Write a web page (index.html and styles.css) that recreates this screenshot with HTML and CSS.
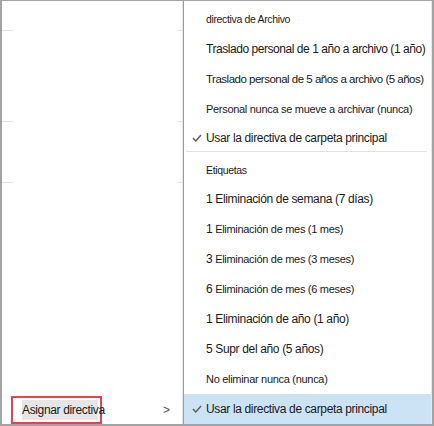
FILE: index.html
```html
<!DOCTYPE html>
<html lang="es">
<head>
<meta charset="utf-8">
<title>Asignar directiva</title>
<link rel="stylesheet" href="styles.css">
</head>
<body>
<div class="frame">
  <div class="pane">
    <div class="rule r1"><span></span><span></span></div>
    <div class="rule r2"><span></span><span></span></div>
    <div class="rule r3"><span></span><span></span></div>
    <div class="assign-row">
      <div class="assign"><span class="hl">Asignar directiv</span>a</div>
      <span class="chev">&gt;</span>
    </div>
  </div>
  <div class="menu">
    <div class="row head"><span>directiva de Archivo</span></div>
    <div class="row lg tight"><span>Traslado personal de 1 año a archivo (1 año)</span></div>
    <div class="row md"><span>Traslado personal de 5 años a archivo (5 años)</span></div>
    <div class="row sm"><span>Personal nunca se mueve a archivar (nunca)</span></div>
    <div class="row lg short"><svg class="check" width="10" height="8" viewBox="0 0 10 8"><polyline points="1,4 3.8,7 9,1" fill="none" stroke="#606060" stroke-width="1.5"/></svg><span>Usar la directiva de carpeta principal</span></div>
    <div class="sep"></div>
    <div class="row head tags"><span>Etiquetas</span></div>
    <div class="row lg"><span>1 Eliminación de semana (7 días)</span></div>
    <div class="row sm"><span><span class="num">1</span> Eliminación de mes (1 mes)</span></div>
    <div class="row sm"><span><span class="num">3</span> Eliminación de mes (3 meses)</span></div>
    <div class="row sm"><span><span class="num">6</span> Eliminación de mes (6 meses)</span></div>
    <div class="row lg"><span>1 Eliminación de año (1 año)</span></div>
    <div class="row lg"><span>5 Supr del año (5 años)</span></div>
    <div class="row sm"><span>No eliminar nunca (nunca)</span></div>
    <div class="row lg selected"><svg class="check" width="10" height="8" viewBox="0 0 10 8"><polyline points="1,4 3.8,7 9,1" fill="none" stroke="#606060" stroke-width="1.5"/></svg><span>Usar la directiva de carpeta principal</span></div>
  </div>
</div>
</body>
</html>
```
FILE: styles.css
```css
html, body {
  margin: 0;
  padding: 0;
  background: #ffffff;
}
body {
  font-family: "Liberation Sans", Arial, sans-serif;
  color: #1a1a1a;
}
.frame {
  box-sizing: border-box;
  width: 434px;
  height: 426px;
  border: 2px solid #a3a3a3;
  border-top-width: 1px;
  display: flex;
  background: #ffffff;
  overflow: hidden;
}
.pane {
  width: 181px;
  flex: none;
  display: flex;
  flex-direction: column;
}
.rule {
  height: 1px;
  display: flex;
  justify-content: space-between;
}
.rule span {
  display: block;
  height: 1px;
  background: #e3e3e3;
}
.rule span:first-child { width: 11px; }
.rule span:last-child { width: 6px; }
.r1 { margin-top: 29px; }
.r2 { margin-top: 90px; }
.r3 { margin-top: 60px; }
.assign-row {
  margin-top: auto;
  height: 28px;
  display: flex;
  align-items: center;
}
.assign {
  box-sizing: border-box;
  margin-left: 9px;
  width: 91px;
  height: 28px;
  border: 2px solid #e8434d;
  display: flex;
  align-items: center;
  padding-left: 9px;
  font-size: 12px;
  letter-spacing: -0.35px;
  white-space: nowrap;
}
.hl {
  background: #e6e6e6;
  padding: 3px 0;
}
.chev {
  margin-left: auto;
  margin-right: 13px;
  font-size: 12px;
  color: #555555;
}
.menu {
  flex: 1;
  min-width: 0;
  border-left: 1px solid #9c9c9c;
  box-shadow: -1px 0 0 #e4e4e4;
  padding-top: 3px;
  display: flex;
  flex-direction: column;
  border-right: 1px solid #e8e8e8;
}
.row {
  position: relative;
  height: 30px;
  flex: none;
  display: flex;
  align-items: center;
  padding-left: 22px;
  white-space: nowrap;
}
.lg { font-size: 12px; letter-spacing: -0.35px; }
.tight { letter-spacing: -0.45px; }
.md { font-size: 11.5px; letter-spacing: -0.5px; }
.sm { font-size: 11px; letter-spacing: -0.3px; }
.head { font-size: 10.5px; letter-spacing: -0.35px; }
.num { font-size: 12px; }
.short { height: 27px; }
.sep {
  height: 1px;
  background: #e2e2e2;
  margin: 0 4px 4px 2px;
}
.tags { height: 28px; }
.check {
  position: absolute;
  left: 8px;
  top: 50%;
  margin-top: -4px;
}
.selected {
  background: #cce3f5;
}
```
